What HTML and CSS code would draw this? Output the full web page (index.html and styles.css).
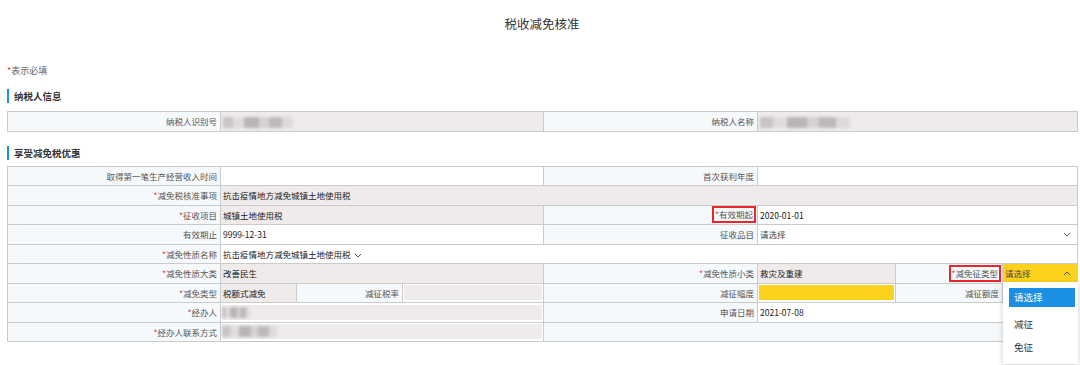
FILE: index.html
```html
<!DOCTYPE html>
<html lang="zh-CN">
<head>
    <meta charset="UTF-8">
    <meta name="viewport" content="width=device-width, initial-scale=1.0">
    <title>税收减免核准</title>
    <link rel="stylesheet" href="styles.css">
</head>
<body>
    <div class="page">
        <div class="title">税收减免核准</div>
        <div class="note"><span class="req">*</span>表示必填</div>

        <div class="section-title">纳税人信息</div>
        <table class="form">
            <colgroup>
                <col style="width:213px"><col style="width:76px"><col style="width:106px"><col style="width:141px">
                <col style="width:214px"><col style="width:138px"><col style="width:107px"><col style="width:75px">
            </colgroup>
            <tr>
                <td class="lbl">纳税人识别号</td>
                <td class="val ro" colspan="3"><span class="blur w70"></span></td>
                <td class="lbl">纳税人名称</td>
                <td class="val ro" colspan="3"><span class="blur w100"></span></td>
            </tr>
        </table>

        <div class="section-title">享受减免税优惠</div>
        <table class="form">
            <colgroup>
                <col style="width:213px"><col style="width:76px"><col style="width:106px"><col style="width:141px">
                <col style="width:214px"><col style="width:138px"><col style="width:107px"><col style="width:75px">
            </colgroup>
            <tr>
                <td class="lbl">取得第一笔生产经营收入时间</td>
                <td class="val" colspan="3"></td>
                <td class="lbl">首次获利年度</td>
                <td class="val" colspan="3"></td>
            </tr>
            <tr>
                <td class="lbl"><span class="req">*</span>减免税核准事项</td>
                <td class="val ro" colspan="7">抗击疫情地方减免城镇土地使用税</td>
            </tr>
            <tr>
                <td class="lbl"><span class="req">*</span>征收项目</td>
                <td class="val ro" colspan="3">城镇土地使用税</td>
                <td class="lbl"><span class="mark"><span class="req">*</span>有效期起</span></td>
                <td class="val" colspan="3">2020-01-01</td>
            </tr>
            <tr>
                <td class="lbl">有效期止</td>
                <td class="val" colspan="3">9999-12-31</td>
                <td class="lbl">征收品目</td>
                <td class="val" colspan="3">
                    <div class="select">请选择<svg class="chev" viewBox="0 0 8 5"><path d="M1 1l3 3 3-3"/></svg></div>
                </td>
            </tr>
            <tr>
                <td class="lbl"><span class="req">*</span>减免性质名称</td>
                <td class="val" colspan="7">抗击疫情地方减免城镇土地使用税<svg class="chev inline" viewBox="0 0 8 5"><path d="M1 1l3 3 3-3"/></svg></td>
            </tr>
            <tr>
                <td class="lbl"><span class="req">*</span>减免性质大类</td>
                <td class="val ro" colspan="3">改善民生</td>
                <td class="lbl"><span class="req">*</span>减免性质小类</td>
                <td class="val ro">救灾及重建</td>
                <td class="lbl"><span class="mark"><span class="req">*</span>减免征类型</span></td>
                <td class="val yellow dd-cell">
                    <div class="select">请选择<svg class="chev" viewBox="0 0 8 5"><path d="M1 4l3-3 3 3"/></svg></div>
                    <ul class="dropdown">
                        <li class="active">请选择</li>
                        <li>减征</li>
                        <li>免征</li>
                    </ul>
                </td>
            </tr>
            <tr>
                <td class="lbl"><span class="req">*</span>减免类型</td>
                <td class="val ro">税额式减免</td>
                <td class="lbl">减征税率</td>
                <td class="val"><div class="input grey"></div></td>
                <td class="lbl">减征幅度</td>
                <td class="val"><div class="input yellow"></div></td>
                <td class="lbl">减征额度</td>
                <td class="val"></td>
            </tr>
            <tr>
                <td class="lbl"><span class="req">*</span>经办人</td>
                <td class="val" colspan="3"><div class="input grey"><span class="blur w30"></span></div></td>
                <td class="lbl">申请日期</td>
                <td class="val" colspan="3">2021-07-08</td>
            </tr>
            <tr>
                <td class="lbl"><span class="req">*</span>经办人联系方式</td>
                <td class="val" colspan="3"><div class="input grey"><span class="blur w60"></span></div></td>
                <td class="lbl" colspan="4"></td>
            </tr>
        </table>
    </div>
</body>
</html>
```

FILE: styles.css
```css
* {
    margin: 0;
    padding: 0;
    box-sizing: border-box;
}

body {
    background: #fff;
    font-family: "Noto Sans CJK SC", "DejaVu Sans", sans-serif;
    color: #333;
    min-height: 365px;
}

.page {
    padding: 0 3px 30px 7px;
}

.title {
    height: 48px;
    line-height: 48px;
    text-align: center;
    font-size: 12.5px;
    color: #333;
}

.note {
    margin-top: 16px;
    line-height: 14px;
    font-size: 9px;
    color: #666;
}

.req {
    color: #e4393c;
}

.section-title {
    margin-top: 11px;
    margin-bottom: 8px;
    line-height: 14px;
    font-size: 9.5px;
    font-weight: bold;
    color: #333;
    border-left: 2px solid #1e8fe8;
    padding-left: 5px;
}

.form + .section-title {
    margin-top: 14px;
    margin-bottom: 6px;
}

.form {
    width: 1070px;
    table-layout: fixed;
    border-collapse: collapse;
    font-size: 8.5px;
}

.form td {
    height: 19.5px;
    border: 1px solid #cbcbcb;
    white-space: nowrap;
    overflow: visible;
    vertical-align: middle;
}

.lbl {
    background: #f6f9fb;
    text-align: right;
    padding-right: 3px;
    color: #555;
}

.val {
    background: #fff;
    padding: 0 2px;
    color: #222;
}

.val.ro {
    background: #efebeb;
}

.yellow,
.val.yellow {
    background: #fdd21c;
}

.mark {
    display: inline-block;
    border: 2px solid #e8262b;
    padding: 0 1px;
    line-height: 13px;
    margin-right: -2px;
}

.select {
    display: flex;
    align-items: center;
    justify-content: space-between;
    color: #444;
}

.chev {
    width: 8px;
    height: 5px;
    margin-right: 4px;
}

.chev path {
    fill: none;
    stroke: #555;
    stroke-width: 1;
}

.chev.inline {
    margin-left: 3px;
    vertical-align: middle;
}

.input {
    height: 15px;
    margin: 0 -1px;
    display: flex;
    align-items: center;
}

.input.grey {
    background: #efebeb;
}

.blur {
    display: inline-block;
    height: 11px;
    vertical-align: middle;
    filter: blur(1.6px);
    background: linear-gradient(to right, #c8c4c6 0 15%, #e0dcde 15% 30%, #b9b5b7 30% 52%, #d6d2d4 52% 66%, #bdb9bb 66% 85%, #dedadc 85%);
}

.w30 { width: 28px; }
.w60 { width: 55px; }
.w70 { width: 70px; }
.w100 { width: 90px; }

.dd-cell {
    position: relative;
}

.dropdown {
    position: absolute;
    top: 18px;
    left: 0;
    width: 75px;
    height: 82px;
    list-style: none;
    background: #fff;
    box-shadow: 0 2px 6px rgba(0, 0, 0, 0.2);
    padding: 6px 3px 0 6px;
    z-index: 10;
}

.dropdown li {
    height: 18px;
    line-height: 18px;
    margin-bottom: 5px;
    padding-left: 5px;
    font-size: 9.5px;
    color: #333;
}

.dropdown li.active {
    height: 19px;
    line-height: 19px;
    margin-bottom: 8px;
    background: #1a8fe3;
    color: #fff;
}
```
